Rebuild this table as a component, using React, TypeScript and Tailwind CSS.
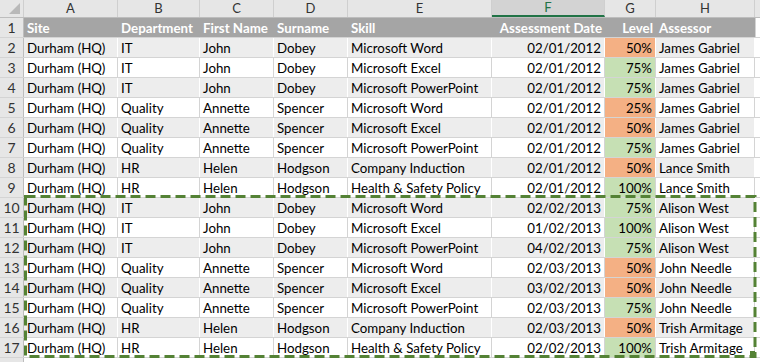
const cols = [
  { key: "A", w: "w-[94px]", align: "text-left" },
  { key: "B", w: "w-[82px]", align: "text-left" },
  { key: "C", w: "w-[74px]", align: "text-left" },
  { key: "D", w: "w-[74px]", align: "text-left" },
  { key: "E", w: "w-[144px]", align: "text-left" },
  { key: "F", w: "w-[113px]", align: "text-right" },
  { key: "G", w: "w-[51px]", align: "text-right" },
  { key: "H", w: "w-[99px]", align: "text-left" },
];

const headers = ["Site", "Department", "First Name", "Surname", "Skill", "Assessment Date", "Level", "Assessor"];

const rows: string[][] = [
  ["Durham (HQ)", "IT", "John", "Dobey", "Microsoft Word", "02/01/2012", "50%", "James Gabriel"],
  ["Durham (HQ)", "IT", "John", "Dobey", "Microsoft Excel", "02/01/2012", "75%", "James Gabriel"],
  ["Durham (HQ)", "IT", "John", "Dobey", "Microsoft PowerPoint", "02/01/2012", "75%", "James Gabriel"],
  ["Durham (HQ)", "Quality", "Annette", "Spencer", "Microsoft Word", "02/01/2012", "25%", "James Gabriel"],
  ["Durham (HQ)", "Quality", "Annette", "Spencer", "Microsoft Excel", "02/01/2012", "50%", "James Gabriel"],
  ["Durham (HQ)", "Quality", "Annette", "Spencer", "Microsoft PowerPoint", "02/01/2012", "75%", "James Gabriel"],
  ["Durham (HQ)", "HR", "Helen", "Hodgson", "Company Induction", "02/01/2012", "50%", "Lance Smith"],
  ["Durham (HQ)", "HR", "Helen", "Hodgson", "Health & Safety Policy", "02/01/2012", "100%", "Lance Smith"],
  ["Durham (HQ)", "IT", "John", "Dobey", "Microsoft Word", "02/02/2013", "75%", "Alison West"],
  ["Durham (HQ)", "IT", "John", "Dobey", "Microsoft Excel", "01/02/2013", "100%", "Alison West"],
  ["Durham (HQ)", "IT", "John", "Dobey", "Microsoft PowerPoint", "04/02/2013", "75%", "Alison West"],
  ["Durham (HQ)", "Quality", "Annette", "Spencer", "Microsoft Word", "02/03/2013", "50%", "John Needle"],
  ["Durham (HQ)", "Quality", "Annette", "Spencer", "Microsoft Excel", "03/02/2013", "50%", "John Needle"],
  ["Durham (HQ)", "Quality", "Annette", "Spencer", "Microsoft PowerPoint", "02/03/2013", "75%", "John Needle"],
  ["Durham (HQ)", "HR", "Helen", "Hodgson", "Company Induction", "02/03/2013", "50%", "Trish Armitage"],
  ["Durham (HQ)", "HR", "Helen", "Hodgson", "Health & Safety Policy", "02/02/2013", "100%", "Trish Armitage"],
];

function levelBg(v: string) {
  return v === "50%" || v === "25%" ? "bg-[#f4b084]" : "bg-[#c6e0b4]";
}

export default function App() {
  return (
    <div
      className="relative w-[760px] h-[362px] overflow-hidden bg-white text-[13.3px] text-black"
      style={{ fontFamily: "Lato, 'Open Sans', sans-serif" }}
    >
      {/* column letters */}
      <div className="flex h-[18px] bg-[#e6e6e6] border-b border-[#bdbdbd]">
        <div className="relative w-[24px] shrink-0 border-r border-[#cfcfcf]">
          <div className="absolute right-[3px] bottom-[3px] w-0 h-0 border-l-[11px] border-l-transparent border-b-[11px] border-b-[#b9b9b9]" />
        </div>
        {cols.map((c) => (
          <div
            key={c.key}
            className={`${c.w} shrink-0 flex items-center justify-center border-r border-[#cfcfcf] text-[13px] leading-none ${
              c.key === "F" ? "bg-[#d3d3d3] text-[#217346] border-b-2 border-b-[#217346]" : "text-[#333]"
            }`}
          >
            {c.key}
          </div>
        ))}
        <div className="flex-1" />
      </div>

      {/* header row */}
      <div className="flex h-[20px] border-b border-[#d4d4d4]">
        <div className="w-[24px] shrink-0 bg-[#e6e6e6] border-r border-[#bdbdbd] flex items-center justify-center text-[14px] text-[#333]">
          1
        </div>
        {cols.map((c, i) => (
          <div
            key={c.key}
            className={`${c.w} shrink-0 bg-[#a5a5a5] text-white font-bold px-[3px] pt-[1px] leading-[19px] whitespace-nowrap overflow-hidden ${c.align}`}
          >
            {headers[i]}
          </div>
        ))}
        <div className="flex-1 border-l border-[#d4d4d4]" />
      </div>

      {rows.map((r, ri) => {
        const n = ri + 2;
        const grey = n % 2 === 0;
        return (
          <div key={n} className="flex h-[20px] border-b border-[#d4d4d4]">
            <div className="w-[24px] shrink-0 bg-[#e6e6e6] border-r border-[#bdbdbd] flex items-center justify-center text-[14px] text-[#333]">
              {n}
            </div>
            {cols.map((c, ci) => (
              <div
                key={c.key}
                className={`${c.w} shrink-0 px-[3px] pt-[1px] leading-[18px] whitespace-nowrap overflow-hidden border-r ${c.align} ${
                  ci === 6 ? levelBg(r[ci]) : grey ? "bg-[#ededed]" : "bg-white"
                } ${grey ? "border-white" : "border-[#d4d4d4]"}`}
              >
                {r[ci]}
              </div>
            ))}
            <div className="flex-1" />
          </div>
        );
      })}

      <div className="flex h-[20px]">
        <div className="w-[24px] shrink-0 bg-[#e6e6e6] border-r border-[#bdbdbd]" />
      </div>

      {/* copy marquee */}
      <svg className="absolute left-0 top-0 pointer-events-none" width="760" height="362">
        <rect
          x="25.5"
          y="196.5"
          width="729.5"
          height="160"
          fill="none"
          stroke="#548235"
          strokeWidth="3"
          strokeDasharray="10 5"
        />
        <rect x="750" y="351" width="5" height="5" fill="#548235" />
      </svg>
    </div>
  );
}
